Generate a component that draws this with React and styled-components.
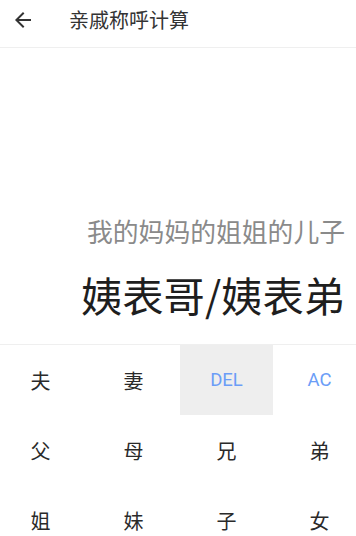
import React from "react";
import styled, { createGlobalStyle } from "styled-components";

const Global = createGlobalStyle`
  html, body { margin: 0; padding: 0; background: #ffffff; }
  body { width: 356px; height: 536px; overflow: hidden; font-family: "Noto Sans CJK SC", "Noto Sans", Roboto, sans-serif; }
  #root { width: 356px; height: 536px; overflow: hidden; }
`;

const Page = styled.div`
  display: flex;
  flex-direction: column;
  width: 356px;
  height: 536px;
  overflow: hidden;
  background: #fff;
`;

const Header = styled.header`
  box-sizing: border-box;
  height: 48px;
  padding-bottom: 7px;
  display: flex;
  align-items: center;
  border-bottom: 1px solid #efefef;
  flex-shrink: 0;
`;

const BackButton = styled.button`
  width: 24px;
  height: 24px;
  margin-left: 11px;
  padding: 0;
  border: 0;
  background: none;
  display: flex;
  align-items: center;
  justify-content: center;
  color: #333;
`;

const Title = styled.h1`
  margin: 0 0 0 34px;
  font-size: 20px;
  font-weight: 400;
  line-height: 28px;
  color: #333;
  font-family: "Noto Sans CJK SC", sans-serif;
`;

const Display = styled.section`
  flex: 0 0 296px;
  box-sizing: border-box;
  display: flex;
  flex-direction: column;
  justify-content: flex-end;
  align-items: flex-end;
  padding: 0 11px 20px 0;
`;

const Expression = styled.div`
  font-size: 25.8px;
  line-height: 34px;
  color: #8a8a8a;
  margin-bottom: 16px;
  white-space: nowrap;
`;

const Result = styled.div`
  font-size: 41.3px;
  line-height: 60px;
  color: #1e1e1e;
  white-space: nowrap;
`;

const Keypad = styled.div`
  border-top: 1px solid #efefef;
  flex-shrink: 0;
`;

const Grid = styled.div`
  display: grid;
  grid-template-columns: repeat(4, 93px);
  grid-auto-rows: 70px;
  width: 372px;
  margin-left: -6px;
`;

const Key = styled.button`
  border: 0;
  padding: 0;
  margin: 0;
  display: flex;
  align-items: center;
  justify-content: center;
  background: ${(p) => (p.$pressed ? "#eeeeee" : "transparent")};
  color: ${(p) => (p.$action ? "#6b9df7" : "#2a2a2a")};
  font-size: ${(p) => (p.$action ? "18.5px" : "20px")};
  font-family: ${(p) =>
    p.$action ? 'Roboto, "Noto Sans", sans-serif' : '"Noto Sans CJK SC", sans-serif'};
  font-weight: 400;
`;

const keys = [
  { t: "夫" },
  { t: "妻" },
  { t: "DEL", action: true, pressed: true },
  { t: "AC", action: true },
  { t: "父" },
  { t: "母" },
  { t: "兄" },
  { t: "弟" },
  { t: "姐" },
  { t: "妹" },
  { t: "子" },
  { t: "女" },
];

export default function App() {
  return (
    <>
      <Global />
      <Page>
        <Header>
          <BackButton aria-label="back">
            <svg width="24" height="24" viewBox="0 0 24 24">
              <path
                fill="currentColor"
                d="M20 11H7.83l5.59-5.59L12 4l-8 8 8 8 1.41-1.41L7.83 13H20v-2z"
              />
            </svg>
          </BackButton>
          <Title>亲戚称呼计算</Title>
        </Header>
        <Display>
          <Expression>我的妈妈的姐姐的儿子</Expression>
          <Result>姨表哥/姨表弟</Result>
        </Display>
        <Keypad>
          <Grid>
            {keys.map((k) => (
              <Key key={k.t} $action={k.action} $pressed={k.pressed}>
                {k.t}
              </Key>
            ))}
          </Grid>
        </Keypad>
      </Page>
    </>
  );
}
